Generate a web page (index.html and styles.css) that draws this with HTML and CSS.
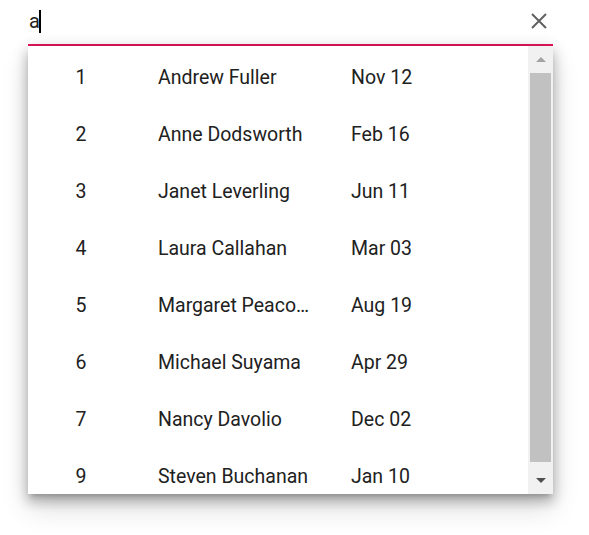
FILE: index.html
```html
<!DOCTYPE html>
<html>
<head>
<meta charset="utf-8">
<link rel="stylesheet" href="styles.css">
</head>
<body>
<div class="combo">
  <div class="input-row">
    <div class="input-text">a<span class="caret"></span></div>
    <svg class="clear" width="18" height="18" viewBox="0 0 18 18"><path d="M2 2 L16 16 M16 2 L2 16" stroke="#616161" stroke-width="2" fill="none"/></svg>
  </div>
  <div class="popup">
    <div class="list">
      <div class="row"><div class="c-id">1</div><div class="c-name">Andrew Fuller</div><div class="c-date">Nov 12</div></div>
      <div class="row"><div class="c-id">2</div><div class="c-name">Anne Dodsworth</div><div class="c-date">Feb 16</div></div>
      <div class="row"><div class="c-id">3</div><div class="c-name">Janet Leverling</div><div class="c-date">Jun 11</div></div>
      <div class="row"><div class="c-id">4</div><div class="c-name">Laura Callahan</div><div class="c-date">Mar 03</div></div>
      <div class="row"><div class="c-id">5</div><div class="c-name">Margaret Peacock</div><div class="c-date">Aug 19</div></div>
      <div class="row"><div class="c-id">6</div><div class="c-name">Michael Suyama</div><div class="c-date">Apr 29</div></div>
      <div class="row"><div class="c-id">7</div><div class="c-name">Nancy Davolio</div><div class="c-date">Dec 02</div></div>
      <div class="row"><div class="c-id">9</div><div class="c-name">Steven Buchanan</div><div class="c-date">Jan 10</div></div>
    </div>
    <div class="scrollbar">
      <div class="sb-btn"><span class="arrow-up"></span></div>
      <div class="sb-track"><div class="sb-thumb"></div></div>
      <div class="sb-btn"><span class="arrow-down"></span></div>
    </div>
  </div>
</div>
</body>
</html>
```
FILE: styles.css
```css
html, body {
  margin: 0;
  padding: 0;
  background: #ffffff;
}
body {
  font-family: Roboto, "Liberation Sans", sans-serif;
  color: #212121;
  min-height: 535px;
}
.combo {
  margin-left: 28px;
  width: 525px;
  padding-bottom: 41px;
}
.input-row {
  height: 44px;
  border-bottom: 2px solid #e3165b;
  display: flex;
  align-items: center;
  justify-content: space-between;
}
.input-text {
  font-size: 20px;
  padding-left: 1px;
  display: flex;
  align-items: center;
  line-height: 23px;
  margin-top: -1px;
}
.caret {
  display: inline-block;
  width: 2px;
  height: 23px;
  background: #000;
  margin-left: -1px;
}
.clear {
  margin-right: 5px;
  margin-top: -2px;
}
.popup {
  height: 448px;
  display: flex;
  background: #fff;
  position: relative;
  box-shadow: 0 5px 5px -3px rgba(0,0,0,.2), 0 8px 10px 1px rgba(0,0,0,.14), 0 3px 14px 2px rgba(0,0,0,.12), 0 14px 26px 0 rgba(0,0,0,.14);
}
.list {
  flex: 1;
  overflow: hidden;
  padding-top: 3px;
}
.row {
  height: 57px;
  display: flex;
  align-items: center;
  font-size: 19.5px;
  color: #212121;
}
.c-id {
  width: 106px;
  text-align: center;
}
.c-name {
  width: 153px;
  padding: 0 16px 0 24px;
  white-space: nowrap;
  overflow: hidden;
  text-overflow: ellipsis;
}
.c-date {
  padding-left: 24px;
}
.scrollbar {
  width: 25px;
  background: #f1f1f1;
  display: flex;
  flex-direction: column;
}
.sb-btn {
  height: 27px;
  display: flex;
  align-items: center;
  justify-content: center;
}
.sb-track {
  flex: 1;
  padding: 0 2px;
}
.sb-thumb {
  height: 389px;
  background: #c1c1c1;
}
.arrow-up {
  width: 0;
  height: 0;
  border-left: 5px solid transparent;
  border-right: 5px solid transparent;
  border-bottom: 5px solid #a3a3a3;
}
.arrow-down {
  width: 0;
  height: 0;
  border-left: 5px solid transparent;
  border-right: 5px solid transparent;
  border-top: 5px solid #505050;
}
```
